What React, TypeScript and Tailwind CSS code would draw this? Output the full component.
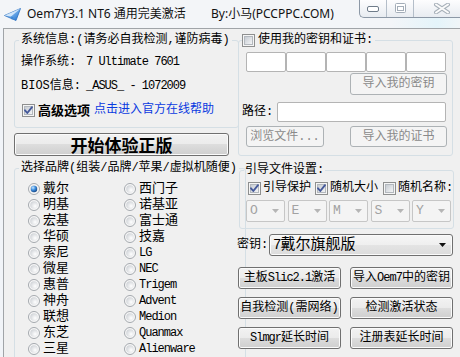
import React from "react";

function L({ children, className = "" }: { children: React.ReactNode; className?: string }) {
  return (
    <span className={"[font-family:'Liberation_Mono',monospace] text-[12px] tracking-[-1px] " + className}>
      {children}
    </span>
  );
}

function CheckBox({ checked }: { checked?: boolean }) {
  return (
    <svg width="13" height="13" viewBox="0 0 13 13" className="shrink-0 block">
      <defs>
        <linearGradient id="cbIn" x1="0" y1="0" x2="1" y2="1">
          <stop offset="0" stopColor="#c4c9d0" />
          <stop offset="1" stopColor="#f6f7f8" />
        </linearGradient>
      </defs>
      <rect x="0.5" y="0.5" width="12" height="12" fill="#f5f5f5" stroke="#8e8f8f" />
      <rect x="2.5" y="2.5" width="8" height="8" fill="url(#cbIn)" stroke="#b3b8be" />
      {checked && (
        <path
          d="M3 6.3 L5.3 9 L10 3.2"
          fill="none"
          stroke="#45599a"
          strokeWidth="1.9"
          strokeLinecap="round"
          strokeLinejoin="round"
        />
      )}
    </svg>
  );
}

function Radio({ checked }: { checked?: boolean }) {
  return (
    <svg width="12" height="12" viewBox="0 0 12 12" className="shrink-0 block">
      <defs>
        <radialGradient id="rIn" cx="0.65" cy="0.65" r="0.8">
          <stop offset="0" stopColor="#ffffff" />
          <stop offset="1" stopColor="#c9cdd2" />
        </radialGradient>
        <radialGradient id="rSel" cx="0.35" cy="0.3" r="0.8">
          <stop offset="0" stopColor="#c6e6ff" />
          <stop offset="0.45" stopColor="#3f8fdf" />
          <stop offset="1" stopColor="#0c3a78" />
        </radialGradient>
      </defs>
      <circle cx="6" cy="6" r="5.5" fill="#f7f7f7" stroke="#a4a9ae" />
      <circle cx="6" cy="6" r="3.8" fill="url(#rIn)" />
      {checked && <circle cx="6" cy="6" r="3.2" fill="url(#rSel)" />}
    </svg>
  );
}

function Btn({
  children,
  className = "",
  disabled,
}: {
  children: React.ReactNode;
  className?: string;
  disabled?: boolean;
}) {
  return (
    <div
      className={
        (disabled
          ? "border border-[#adb2b5] bg-[#f4f4f4] text-[#8a8a8a] "
          : "border border-[#707070] bg-[linear-gradient(#f2f2f2_0%,#ebebeb_50%,#dddddd_50%,#cfcfcf_100%)] shadow-[inset_0_0_0_1px_#fbfbfb] text-black ") +
        "rounded-[3px] flex items-center justify-center whitespace-nowrap " +
        className
      }
    >
      {children}
    </div>
  );
}

function SmallCombo({ v }: { v: string }) {
  return (
    <div className="w-[39px] h-[22px] border border-[#c6c6c6] rounded-[2px] bg-[#f4f4f4] flex items-center pl-[3px] pr-[5px]">
      <span className="[font-family:'Liberation_Mono',monospace] text-[13px] text-[#a2a2a2]">{v}</span>
      <svg className="ml-auto" width="7" height="4" viewBox="0 0 7 4">
        <path d="M0 0 H7 L3.5 4 Z" fill="#b5b5b5" />
      </svg>
    </div>
  );
}

function Plane() {
  return (
    <svg width="17" height="13" viewBox="0 0 17 13" className="block shrink-0">
      <defs>
        <linearGradient id="pl" x1="0" y1="0" x2="1" y2="1">
          <stop offset="0" stopColor="#bfe3ff" />
          <stop offset="1" stopColor="#1a6fd0" />
        </linearGradient>
      </defs>
      <path d="M0.5 7.5 L16.5 0.5 L12 12.5 Z" fill="url(#pl)" stroke="#2a6fc0" strokeWidth="0.8" strokeLinejoin="round" />
      <path d="M0.5 7.5 L16.5 0.5 L7 8.5 Z" fill="#e7f4ff" opacity="0.8" />
      <path d="M7 8.5 L8 12 L9.5 9.5" fill="#3d86d6" />
    </svg>
  );
}

const leftBrands: string[] = ["戴尔", "明基", "宏基", "华硕", "索尼", "微星", "惠普", "神舟", "联想", "东芝", "三星"];
const rightBrands: { t: string; latin?: boolean }[] = [
  { t: "西门子" },
  { t: "诺基亚" },
  { t: "富士通" },
  { t: "技嘉" },
  { t: "LG", latin: true },
  { t: "NEC", latin: true },
  { t: "Trigem", latin: true },
  { t: "Advent", latin: true },
  { t: "Medion", latin: true },
  { t: "Quanmax", latin: true },
  { t: "Alienware", latin: true },
];

export default function App() {
  return (
    <div className="w-[460px] h-[357px] overflow-hidden bg-[#f1f4f8] flex flex-col text-black text-[12px] [font-family:'Liberation_Mono','Noto_Sans_CJK_SC',monospace]">
      {/* Title bar */}
      <div className="h-[28px] shrink-0 flex items-start bg-[linear-gradient(90deg,#f3f5f8_0%,#f3f5f8_85%,#e4f4fa_95%,#f0f5f8_100%)]">
        <div className="w-[359px] shrink-0 flex items-center pl-[4px] pt-[6px] [font-family:'Noto_Sans','Noto_Sans_CJK_SC',sans-serif] text-[12px] leading-[16px] text-[#111]">
          <Plane />
          <span className="ml-[6px] w-[184px] shrink-0 whitespace-nowrap">Oem7Y3.1 NT6 通用完美激活</span>
          <span className="whitespace-nowrap">By:小马(PCCPPC.COM)</span>
        </div>
        <div className="shrink-0 flex h-[18px] border-l border-b border-[#8c98a6] rounded-bl-[5px] overflow-hidden bg-[linear-gradient(#fdfdfe,#e8ecf1)]">
          <div className="w-[27px] border-r border-[#b4bec9] flex items-center justify-center">
            <svg width="12" height="6" viewBox="0 0 12 6">
              <rect x="0.5" y="0.5" width="11" height="5" rx="1.5" fill="#fff" stroke="#6f7c8a" />
            </svg>
          </div>
          <div className="w-[27px] border-r border-[#b4bec9] flex items-center justify-center pb-[1px]">
            <svg width="11" height="10" viewBox="0 0 11 10">
              <rect x="0.5" y="0.5" width="10" height="9" rx="1" fill="#fff" stroke="#a3adb8" />
              <rect x="2.5" y="3.5" width="6" height="4" fill="#fff" stroke="#a3adb8" />
            </svg>
          </div>
          <div className="w-[55px] flex items-center justify-center pb-[1px]">
            <svg width="18" height="11" viewBox="0 0 18 11">
              <path d="M3 1.5 L15 9.5 M15 1.5 L3 9.5" stroke="#a7b0b9" strokeWidth="4" strokeLinecap="round" />
              <path d="M3 1.5 L15 9.5 M15 1.5 L3 9.5" stroke="#fbfbfb" strokeWidth="2" strokeLinecap="round" />
            </svg>
          </div>
        </div>
      </div>

      {/* Client area */}
      <div className="flex-1 ml-[3px] border-l border-t border-[#a0a4a8] bg-[#f0f0f0] flex">
        {/* Left column */}
        <div className="w-[225px] shrink-0 pl-[10px] pt-[3px] flex flex-col">
          <fieldset className="h-[96px] border border-[#d5dfe5] rounded-[3px] px-[6px]">
            <legend className="-ml-[2px] px-[2px] leading-[16px] whitespace-nowrap">系统信息:(请务必自我检测,谨防病毒)</legend>
            <div className="mt-[1px] h-[25px] flex items-center whitespace-nowrap">
              <span className="w-[65px] shrink-0">操作系统:</span>
              <L className="tracking-[-1.3px]">7 Ultimate 7601</L>
            </div>
            <div className="h-[24px] flex items-center whitespace-nowrap">
              <span className="w-[65px] shrink-0">BIOS信息:</span>
              <L className="tracking-[-1.3px]">_ASUS_ - 1072009</L>
            </div>
            <div className="h-[24px] flex items-center whitespace-nowrap">
              <div className="ml-[1px]">
                <CheckBox checked />
              </div>
              <span className="ml-[3px] font-bold text-[13px] [font-family:'Noto_Sans_CJK_SC',sans-serif]">高级选项</span>
              <span className="ml-[4px] text-[#0a3ae0]">点击进入官方在线帮助</span>
            </div>
          </fieldset>

          <Btn className="mt-[5px] h-[23px] w-full">
            <span className="text-[17px] font-bold leading-[20px] [font-family:'Noto_Sans_CJK_SC',sans-serif]">开始体验正版</span>
          </Btn>

          <fieldset className="mt-[4px] h-[220px] border border-[#d5dfe5] rounded-[3px] px-[6px]">
            <legend className="-ml-[2px] px-[2px] leading-[16px] whitespace-nowrap">选择品牌(组装/品牌/苹果/虚拟机随便)</legend>
            <div className="mt-[5px] grid grid-cols-[96px_1fr]">
              {leftBrands.map((b, i) => (
                <React.Fragment key={b}>
                  <div className="h-[16px] flex items-center pl-[7px]">
                    <Radio checked={i === 0} />
                    <span className="ml-[3px] text-[13px] leading-[16px]">{b}</span>
                  </div>
                  <div className="h-[16px] flex items-center pl-[7px]">
                    <Radio />
                    {rightBrands[i].latin ? (
                      <L className="ml-[3px] tracking-[-0.6px] leading-[16px]">{rightBrands[i].t}</L>
                    ) : (
                      <span className="ml-[3px] text-[13px] leading-[16px]">{rightBrands[i].t}</span>
                    )}
                  </div>
                </React.Fragment>
              ))}
            </div>
          </fieldset>
        </div>

        {/* Right column */}
        <div className="flex-1 pl-[8px] pt-[3px] flex flex-col">
          <fieldset className="ml-[1px] w-[215px] h-[124px] border border-[#d5dfe5] rounded-[3px]">
            <legend className="ml-[3px] pr-[2px] leading-[16px]">
              <div className="flex items-center whitespace-nowrap">
                <CheckBox />
                <span className="ml-[3px]">使用我的密钥和证书:</span>
              </div>
            </legend>
            <div className="mt-[4px] ml-[7px] flex">
              {[0, 1, 2, 3, 4].map((k) => (
                <div key={k} className="w-[40px] h-[20px] border border-[#b4b4b4] rounded-[2px] bg-white" />
              ))}
            </div>
            <Btn disabled className="mt-[1px] ml-[111px] w-[97px] h-[22px]">
              导入我的密钥
            </Btn>
            <div className="mt-[7px] ml-[3px] flex items-center h-[20px]">
              <span className="w-[35px] shrink-0">路径:</span>
              <div className="w-[169px] h-[20px] border border-[#b4b4b4] rounded-[2px] bg-white" />
            </div>
            <div className="mt-[4px] flex">
              <Btn disabled className="ml-[7px] w-[78px] h-[21px]">
                浏览文件...
              </Btn>
              <Btn disabled className="ml-[26px] w-[97px] h-[21px]">
                导入我的证书
              </Btn>
            </div>
          </fieldset>

          <fieldset className="mt-[6px] ml-[2px] w-[215px] h-[67px] border border-[#d5dfe5] rounded-[3px]">
            <legend className="ml-[4px] px-[1px] leading-[16px] whitespace-nowrap">引导文件设置:</legend>
            <div className="mt-[2px] ml-[8px] h-[16px] flex items-center whitespace-nowrap">
              <CheckBox checked />
              <span className="ml-[2px]">引导保护</span>
              <div className="ml-[4px]">
                <CheckBox checked />
              </div>
              <span className="ml-[2px]">随机大小</span>
              <div className="ml-[5px]">
                <CheckBox />
              </div>
              <span className="ml-[2px]">随机名称:</span>
            </div>
            <div className="mt-[4px] ml-[6px] flex gap-[2.5px]">
              {["O", "E", "M", "S", "Y"].map((v) => (
                <SmallCombo key={v} v={v} />
              ))}
            </div>
          </fieldset>

          <div className="mt-[5px] h-[22px] flex items-center">
            <span className="w-[32px] shrink-0">密钥:</span>
            <div className="w-[184px] h-[22px] border border-[#707070] rounded-[3px] bg-[linear-gradient(#f6f6f6_0%,#efefef_50%,#e4e4e4_50%,#dcdcdc_100%)] shadow-[inset_0_0_0_1px_#fbfbfb] flex items-center pl-[3px] pr-[6px]">
              <span className="text-[15px] leading-[18px] whitespace-nowrap">
                <L className="text-[14px] tracking-[-1px]">7</L>戴尔旗舰版
              </span>
              <svg className="ml-auto" width="7" height="4" viewBox="0 0 7 4">
                <path d="M0 0 H7 L3.5 4 Z" fill="#111" />
              </svg>
            </div>
          </div>

          <div className="mt-[11px] ml-[1px] grid grid-cols-[103px_103px] gap-x-[9px] gap-y-[8px]">
            <Btn className="h-[22px]">
              主板<L>Slic2.1</L>激活
            </Btn>
            <Btn className="h-[22px]">
              导入<L>Oem7</L>中的密钥
            </Btn>
            <Btn className="h-[22px]">自我检测(需网络)</Btn>
            <Btn className="h-[22px]">检测激活状态</Btn>
            <Btn className="h-[22px]">
              <L>Slmgr</L>延长时间
            </Btn>
            <Btn className="h-[22px]">注册表延长时间</Btn>
          </div>
        </div>
      </div>
    </div>
  );
}
